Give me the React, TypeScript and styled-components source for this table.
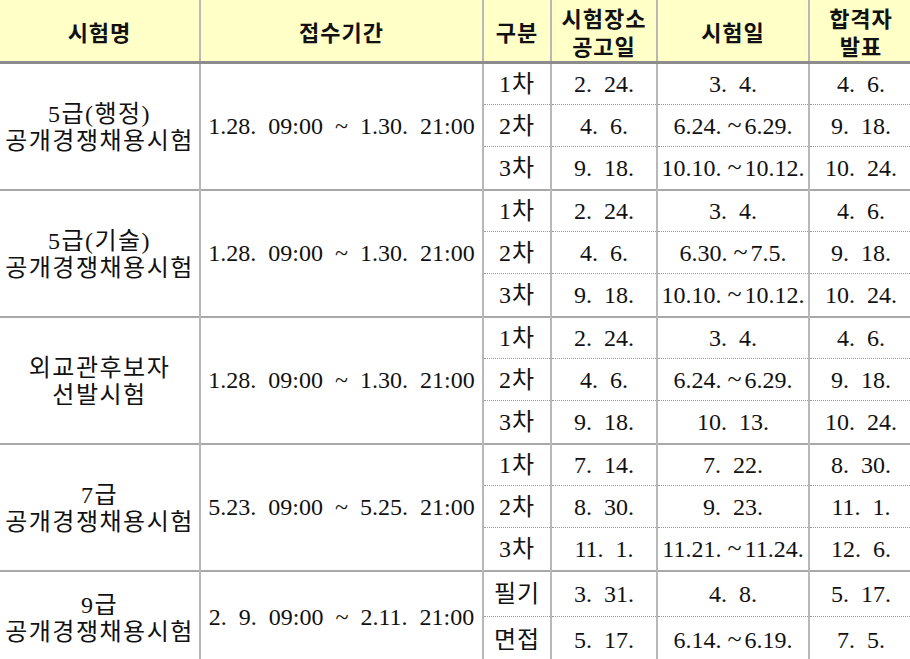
import styled, { createGlobalStyle } from "styled-components";

type Stage = [string, string, string, string];

interface Group {
  name: string[];
  period: string;
  stages: Stage[];
}

const groups: Group[] = [
  {
    name: ["5급(행정)", "공개경쟁채용시험"],
    period: "1.28.  09:00  ~  1.30.  21:00",
    stages: [
      ["1차", "2.  24.", "3.  4.", "4.  6."],
      ["2차", "4.  6.", "6.24.~6.29.", "9.  18."],
      ["3차", "9.  18.", "10.10.~10.12.", "10.  24."],
    ],
  },
  {
    name: ["5급(기술)", "공개경쟁채용시험"],
    period: "1.28.  09:00  ~  1.30.  21:00",
    stages: [
      ["1차", "2.  24.", "3.  4.", "4.  6."],
      ["2차", "4.  6.", "6.30.~7.5.", "9.  18."],
      ["3차", "9.  18.", "10.10.~10.12.", "10.  24."],
    ],
  },
  {
    name: ["외교관후보자", "선발시험"],
    period: "1.28.  09:00  ~  1.30.  21:00",
    stages: [
      ["1차", "2.  24.", "3.  4.", "4.  6."],
      ["2차", "4.  6.", "6.24.~6.29.", "9.  18."],
      ["3차", "9.  18.", "10.  13.", "10.  24."],
    ],
  },
  {
    name: ["7급", "공개경쟁채용시험"],
    period: "5.23.  09:00  ~  5.25.  21:00",
    stages: [
      ["1차", "7.  14.", "7.  22.", "8.  30."],
      ["2차", "8.  30.", "9.  23.", "11.  1."],
      ["3차", "11.  1.", "11.21.~11.24.", "12.  6."],
    ],
  },
  {
    name: ["9급", "공개경쟁채용시험"],
    period: "2.  9.  09:00  ~  2.11.  21:00",
    stages: [
      ["필기", "3.  31.", "4.  8.", "5.  17."],
      ["면접", "5.  17.", "6.14.~6.19.", "7.  5."],
    ],
  },
];

const GlobalStyle = createGlobalStyle`
  html, body {
    margin: 0;
    padding: 0;
    background: #ffffff;
  }
`;

// date ranges use a wider wave between the two dates
const renderValue = (value: string) => {
  if (!value.includes("~")) return value;
  const [from, to] = value.split("~");
  return (
    <>
      {from}
      <Wave>~</Wave>
      {to}
    </>
  );
};

const App = () => {
  return (
    <>
      <GlobalStyle />
      <Table>
        <colgroup>
          <col style={{ width: 200 }} />
          <col style={{ width: 283 }} />
          <col style={{ width: 68 }} />
          <col style={{ width: 106 }} />
          <col style={{ width: 152 }} />
          <col style={{ width: 103 }} />
        </colgroup>
        <thead>
          <tr>
            <HeadCell>시험명</HeadCell>
            <HeadCell>접수기간</HeadCell>
            <HeadCell>구분</HeadCell>
            <HeadCell>
              <HeadLine>시험장소</HeadLine>
              <HeadLine>공고일</HeadLine>
            </HeadCell>
            <HeadCell>시험일</HeadCell>
            <HeadCell>
              <HeadLine>합격자</HeadLine>
              <HeadLine>발표</HeadLine>
            </HeadCell>
          </tr>
        </thead>
        {groups.map((group) => (
          <tbody key={group.name.join("")}>
            {group.stages.map((stage, i) => {
              const last = i === group.stages.length - 1;
              const tall = group.stages.length === 2;
              return (
                <Row key={stage[0]} $tall={tall} $last={last}>
                  {i === 0 && (
                    <>
                      <NameCell rowSpan={group.stages.length}>
                        {group.name.map((line) => (
                          <NameLine key={line}>{line}</NameLine>
                        ))}
                      </NameCell>
                      <PeriodCell rowSpan={group.stages.length}>
                        {group.period}
                      </PeriodCell>
                    </>
                  )}
                  {stage.map((value, j) => (
                    <DateCell key={j} $last={last}>
                      {j === 0 ? <StageText>{value}</StageText> : renderValue(value)}
                    </DateCell>
                  ))}
                </Row>
              );
            })}
          </tbody>
        ))}
      </Table>
    </>
  );
};

const Table = styled.table`
  width: 912px;
  border-collapse: collapse;
  table-layout: fixed;
  font-family: "Liberation Serif", "Noto Sans CJK KR", serif;
  font-size: 24px;
  color: #111111;

  tbody + tbody {
    border-top: 2px solid #a8a8a8;
  }
`;

const HeadCell = styled.th`
  height: 61px;
  padding: 0;
  background: #ffffc8;
  border-left: 2px solid #b8b8b8;
  border-bottom: 3px solid #8c8c8c;
  font-family: "Noto Sans CJK KR", "Noto Sans", sans-serif;
  font-size: 22px;
  font-weight: 700;
  letter-spacing: 1px;
  color: #111111;
  text-align: center;
  vertical-align: middle;

  &:first-child {
    border-left: none;
  }
`;

const HeadLine = styled.div`
  line-height: 28px;
  white-space: nowrap;
`;

const Row = styled.tr<{ $tall: boolean; $last: boolean }>`
  height: ${(p) => (p.$tall ? 46 : p.$last ? 43 : 42)}px;
`;

const BodyCell = styled.td`
  padding: 0;
  text-align: center;
  vertical-align: middle;
  white-space: pre;
  border-left: 2px solid #b8b8b8;
`;

const NameCell = styled(BodyCell)`
  border-left: none;
  line-height: 27px;
  padding-top: 4px;
`;

const NameLine = styled.div`
  white-space: nowrap;
  letter-spacing: 1.5px;
`;

const PeriodCell = styled(BodyCell)``;

const DateCell = styled(BodyCell)<{ $last: boolean }>`
  border-bottom: ${(p) => (p.$last ? "none" : "1px dotted #9a9a9a")};
  line-height: 1;
`;

const StageText = styled.span`
  letter-spacing: 1px;
`;

const Wave = styled.span`
  display: inline-block;
  padding: 0 3px 0 6px;
  font-size: 26px;
  transform: translateY(-1px);
`;

export default App;
